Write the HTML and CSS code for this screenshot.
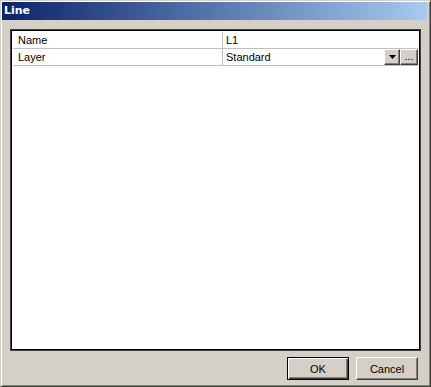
FILE: index.html
```html
<!DOCTYPE html>
<html>
<head>
<meta charset="utf-8">
<link rel="stylesheet" href="styles.css">
</head>
<body>
<div class="window">
  <div class="titlebar">Line</div>
  <div class="body">
    <div class="grid">
      <div class="row">
        <div class="cell label">Name</div>
        <div class="cell value">L1</div>
      </div>
      <div class="row">
        <div class="cell label">Layer</div>
        <div class="cell value">
          <span class="value-text">Standard</span>
          <span class="mini-btn drop"><svg width="7" height="4" viewBox="0 0 7 4"><path d="M0 0h7L3.5 4z" fill="#000"/></svg></span>
          <span class="mini-btn dots">...</span>
        </div>
      </div>
    </div>
    <div class="footer">
      <button class="btn default">OK</button>
      <button class="btn">Cancel</button>
    </div>
  </div>
</div>
</body>
</html>
```
FILE: styles.css
```css
html, body {
  margin: 0;
  padding: 0;
  background: #d4d0c8;
}
.window {
  box-sizing: border-box;
  width: 431px;
  height: 387px;
  background: #d4d0c8;
  border-top: 1px solid #d4d0c8;
  border-left: 1px solid #d4d0c8;
  border-right: 1px solid #404040;
  border-bottom: 1px solid #404040;
  box-shadow: inset 1px 1px #ffffff, inset -1px -1px #808080;
  padding: 1px 3px 1px 1px;
  display: flex;
  flex-direction: column;
  font-family: "Liberation Sans", Arial, sans-serif;
  font-size: 11px;
  color: #000;
}
.titlebar {
  height: 18px;
  flex: none;
  background: linear-gradient(to right, #0a246a, #a6caf0);
  color: #fff;
  font-family: "DejaVu Sans", Verdana, sans-serif;
  font-weight: bold;
  font-size: 11px;
  line-height: 18px;
  padding-left: 2px;
}
.body {
  flex: 1;
  display: flex;
  flex-direction: column;
  padding: 9px 6px 5px 8px;
  min-height: 0;
}
.grid {
  flex: 1;
  background: #fff;
  border: 1px solid #000;
  box-shadow: 0 0 0 1px #404040;
  margin: 1px;
  padding: 1px;
}
.row {
  display: flex;
  height: 16px;
  border-bottom: 1px solid #c0c0c0;
}
.cell {
  line-height: 16px;
  white-space: nowrap;
}
.label {
  width: 204px;
  padding-left: 5px;
  border-right: 1px solid #c0c0c0;
}
.value {
  flex: 1;
  padding-left: 3px;
  display: flex;
  align-items: stretch;
}
.value-text {
  flex: 1;
}
.mini-btn {
  box-sizing: border-box;
  display: flex;
  align-items: center;
  justify-content: center;
  height: 16px;
  background: #d4d0c8;
  border-top: 1px solid #fff;
  border-left: 1px solid #fff;
  border-right: 1px solid #404040;
  border-bottom: 1px solid #404040;
  box-shadow: inset -1px -1px #808080;
}
.drop {
  width: 16px;
}
.dots {
  width: 18px;
  margin-left: 0;
  font-size: 11px;
  line-height: 10px;
  letter-spacing: 0;
  align-items: flex-end;
  padding-bottom: 3px;
}
.footer {
  flex: none;
  display: flex;
  justify-content: flex-end;
  gap: 7px;
  margin-top: 6px;
  padding-right: 3px;
}
.btn {
  box-sizing: border-box;
  width: 62px;
  height: 23px;
  padding: 0;
  margin: 0;
  background: #d4d0c8;
  font-family: "Liberation Sans", Arial, sans-serif;
  font-size: 11px;
  color: #000;
  border-top: 1px solid #fff;
  border-left: 1px solid #fff;
  border-right: 1px solid #404040;
  border-bottom: 1px solid #404040;
  box-shadow: inset -1px -1px #808080, inset 1px 1px #d4d0c8;
}
.btn.default {
  border: 1px solid #000;
  box-shadow: inset 1px 1px #fff, inset -1px -1px #404040, inset -2px -2px #808080;
}
```
